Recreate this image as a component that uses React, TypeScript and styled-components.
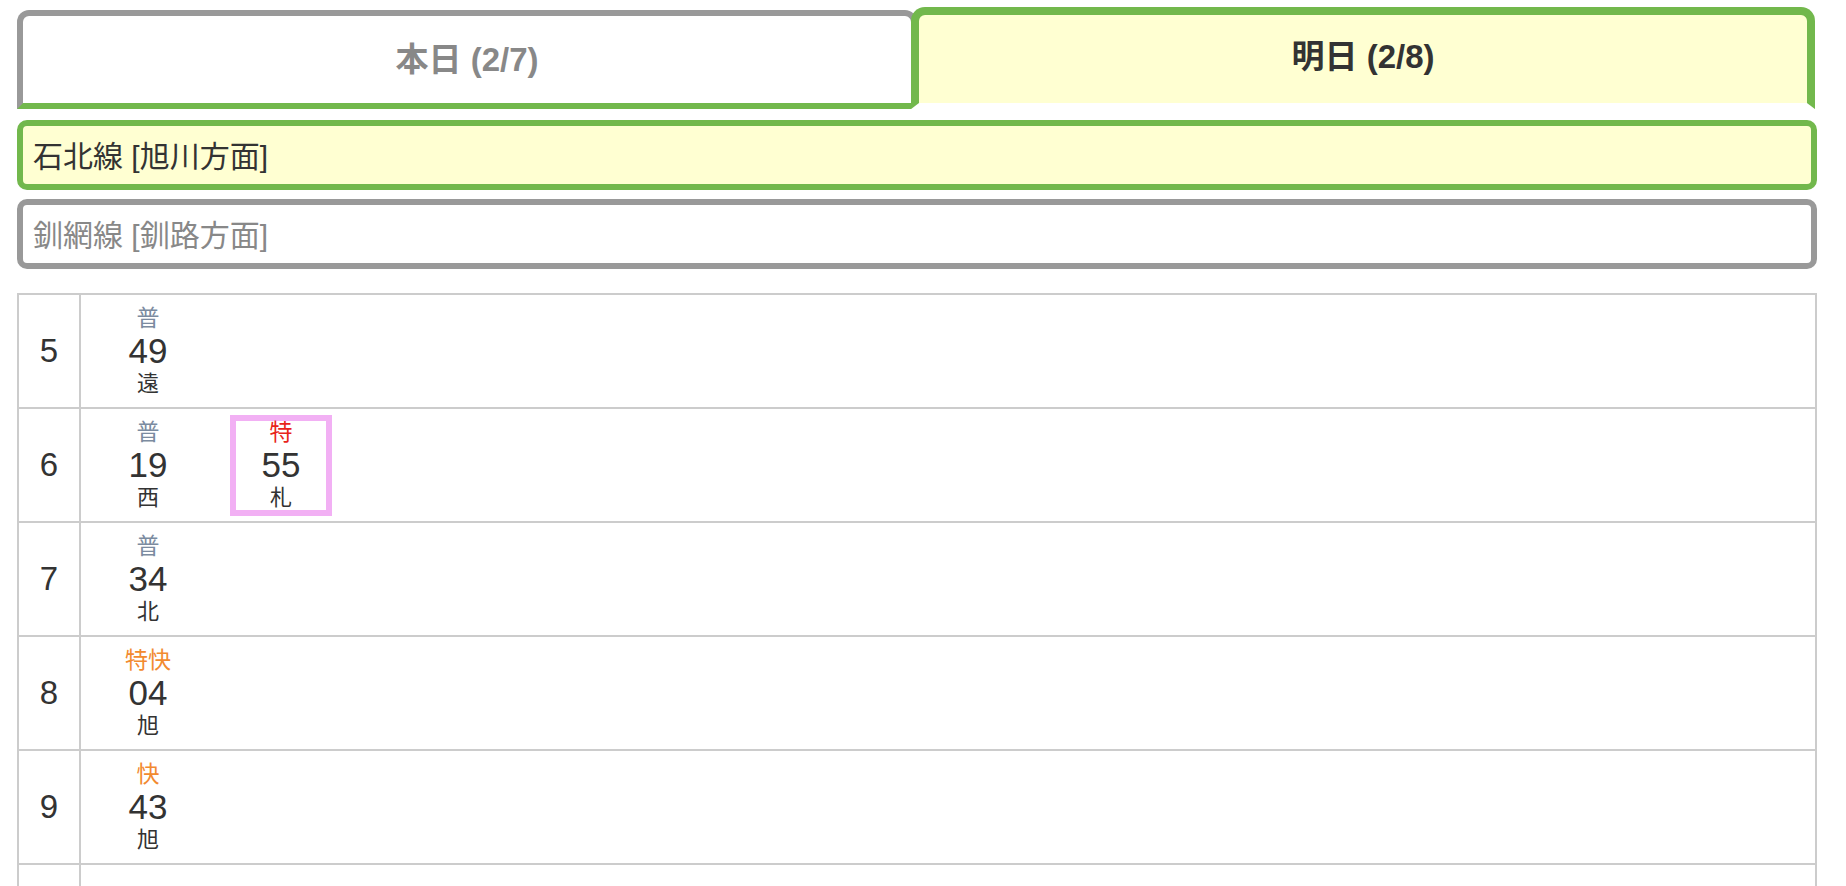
import React from "react";
import styled, { createGlobalStyle } from "styled-components";

const GlobalStyle = createGlobalStyle`
  html, body {
    margin: 0;
    padding: 0;
    background: #ffffff;
  }
  body {
    font-family: "Liberation Sans", "Noto Sans CJK JP", sans-serif;
    color: #333333;
  }
`;

const GREEN = "#72b84c";
const YELLOW = "#ffffd2";
const GRAY = "#999999";
const GRID = "#cccccc";

const Page = styled.div`
  width: 1800px;
  padding: 7px 0 0 17px;
`;

const Tabs = styled.div`
  display: flex;
  align-items: flex-end;
  height: 102px;
`;

const Tab = styled.div<{ $active?: boolean }>`
  box-sizing: border-box;
  display: flex;
  align-items: center;
  justify-content: center;
  font-size: 33px;
  font-weight: bold;
  ${(p) =>
    p.$active
      ? `
    position: relative;
    width: 904px;
    height: 102px;
    margin-left: -6px;
    background: ${YELLOW};
    color: #333333;
    border: 8px solid ${GREEN};
    border-bottom: 6px solid #ffffff;
    border-radius: 14px 14px 0 0;
    padding-bottom: 10px;
  `
      : `
    width: 900px;
    height: 99px;
    background: #ffffff;
    color: #888888;
    border: 6px solid ${GRAY};
    border-bottom-color: ${GREEN};
    border-radius: 12px 12px 0 0;
    padding-bottom: 6px;
  `}
`;

const Lines = styled.div`
  display: flex;
  flex-direction: column;
  gap: 9px;
  margin-top: 11px;
`;

const LineBox = styled.div<{ $active?: boolean }>`
  box-sizing: border-box;
  height: 70px;
  display: flex;
  align-items: center;
  padding: 0 0 2px 10px;
  border-radius: 10px;
  font-size: 30px;
  border: 6px solid ${(p) => (p.$active ? GREEN : GRAY)};
  background: ${(p) => (p.$active ? YELLOW : "#ffffff")};
  color: ${(p) => (p.$active ? "#333333" : "#888888")};
`;

const Timetable = styled.div`
  margin-top: 24px;
  border: 2px solid ${GRID};
  border-bottom: none;
`;

const Row = styled.div`
  display: flex;
  height: 112px;
  border-bottom: 2px solid ${GRID};
`;

const Hour = styled.div`
  flex: 0 0 60px;
  display: flex;
  align-items: center;
  justify-content: center;
  border-right: 2px solid ${GRID};
  font-size: 33px;
  color: #333333;
`;

const Minutes = styled.div`
  flex: 1;
  display: flex;
  align-items: center;
  padding-left: 16px;
  gap: 31px;
`;

const Train = styled.div<{ $highlight?: boolean }>`
  box-sizing: border-box;
  width: 102px;
  height: 101px;
  border: 6px solid ${(p) => (p.$highlight ? "#f2b0f4" : "transparent")};
  display: flex;
  flex-direction: column;
  align-items: center;
  justify-content: center;
`;

const typeColors: Record<string, string> = {
  普: "#7b8ba0",
  特: "#e8231a",
  特快: "#f28a30",
  快: "#f28a30",
};

const Kind = styled.div<{ $color: string }>`
  font-size: 23px;
  line-height: 26px;
  color: ${(p) => p.$color};
`;

const Minute = styled.div`
  font-size: 35px;
  line-height: 40px;
  color: #333333;
`;

const Dest = styled.div`
  font-size: 22px;
  line-height: 26px;
  color: #333333;
`;

type TrainData = { kind: string; min: string; dest: string; hl?: boolean };

const rows: { hour: number; trains: TrainData[] }[] = [
  { hour: 5, trains: [{ kind: "普", min: "49", dest: "遠" }] },
  {
    hour: 6,
    trains: [
      { kind: "普", min: "19", dest: "西" },
      { kind: "特", min: "55", dest: "札", hl: true },
    ],
  },
  { hour: 7, trains: [{ kind: "普", min: "34", dest: "北" }] },
  { hour: 8, trains: [{ kind: "特快", min: "04", dest: "旭" }] },
  { hour: 9, trains: [{ kind: "快", min: "43", dest: "旭" }] },
  { hour: 10, trains: [] },
];

export default function App() {
  return (
    <>
      <GlobalStyle />
      <Page>
        <Tabs>
          <Tab>本日 (2/7)</Tab>
          <Tab $active>明日 (2/8)</Tab>
        </Tabs>
        <Lines>
          <LineBox $active>石北線 [旭川方面]</LineBox>
          <LineBox>釧網線 [釧路方面]</LineBox>
        </Lines>
        <Timetable>
          {rows.map((r) => (
            <Row key={r.hour}>
              <Hour>{r.hour}</Hour>
              <Minutes>
                {r.trains.map((t, i) => (
                  <Train key={i} $highlight={t.hl}>
                    <Kind $color={typeColors[t.kind]}>{t.kind}</Kind>
                    <Minute>{t.min}</Minute>
                    <Dest>{t.dest}</Dest>
                  </Train>
                ))}
              </Minutes>
            </Row>
          ))}
        </Timetable>
      </Page>
    </>
  );
}
